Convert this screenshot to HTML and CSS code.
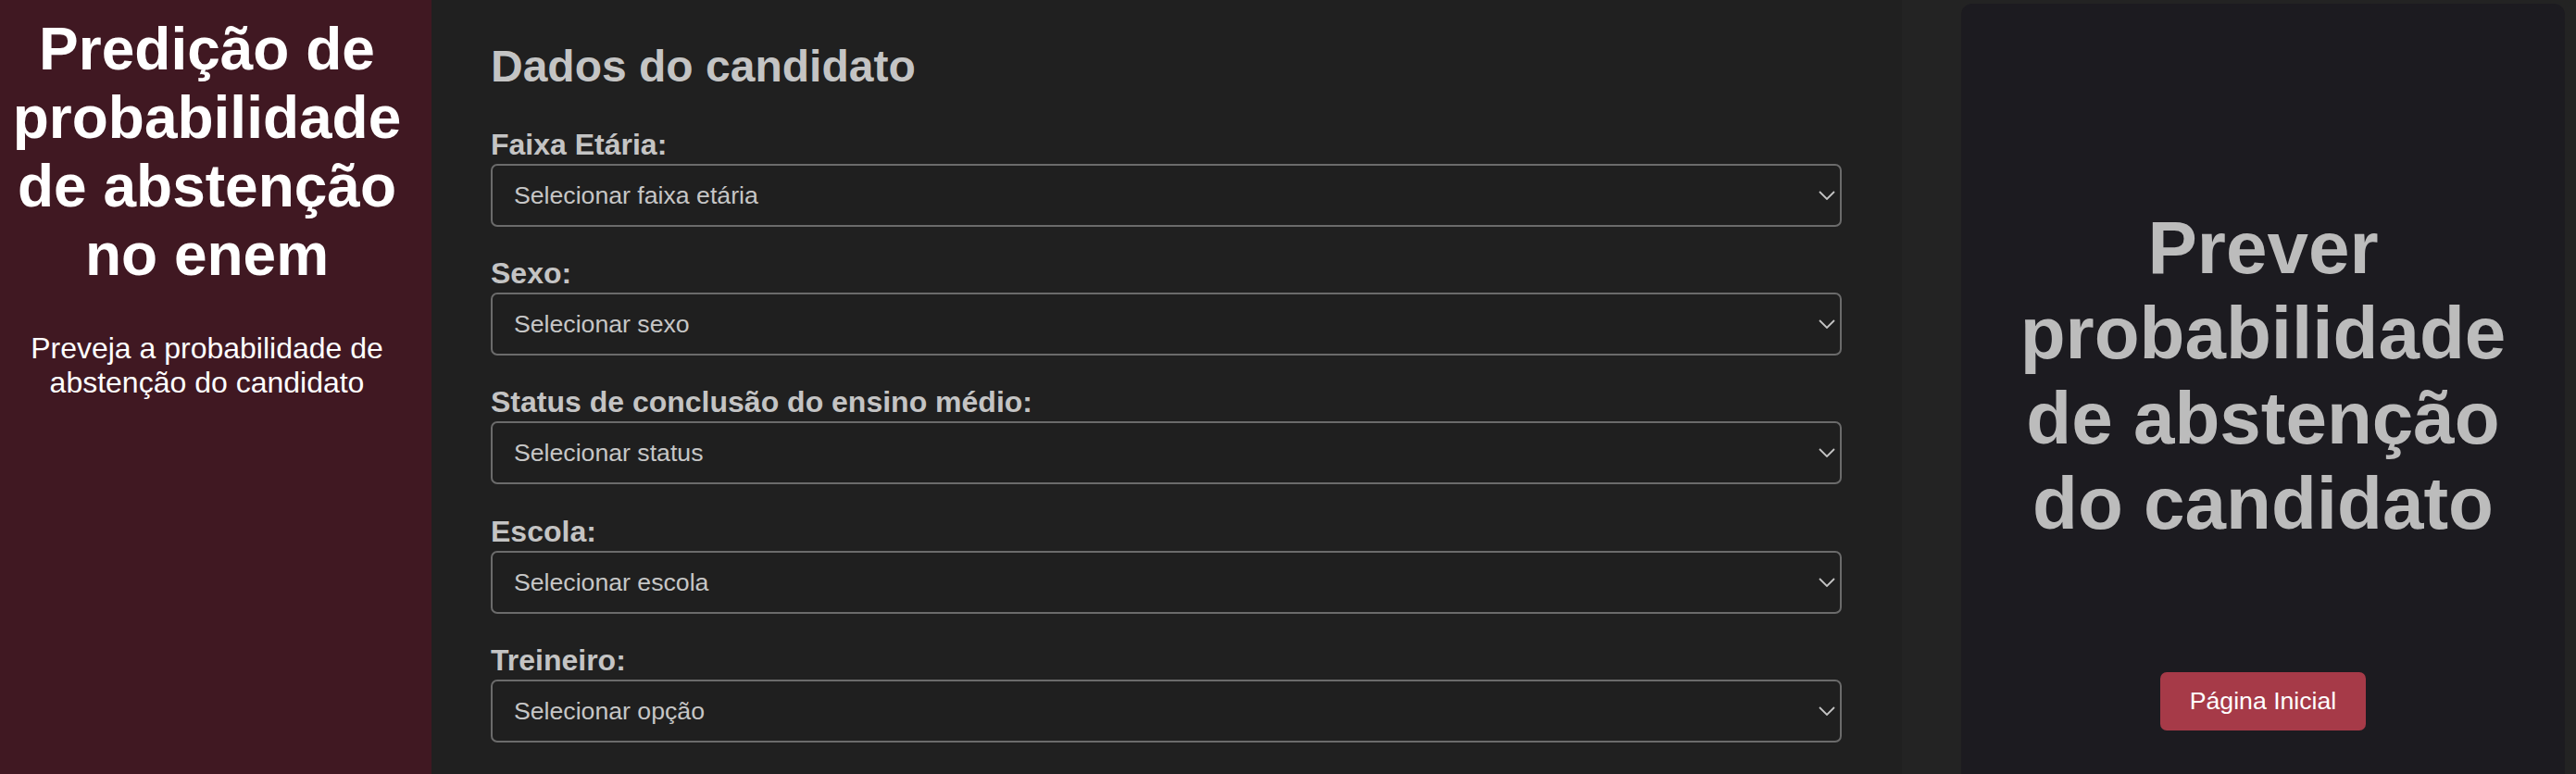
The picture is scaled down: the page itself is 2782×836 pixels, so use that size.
FILE: index.html
```html
<!DOCTYPE html>
<html lang="pt-BR">
<head>
<meta charset="utf-8">
<title>Predição de probabilidade de abstenção no enem</title>
<link rel="stylesheet" href="styles.css">
</head>
<body>
<div class="app">
  <aside class="sidebar">
    <h1 class="sidebar-title">Predição de probabilidade de abstenção no enem</h1>
    <p class="sidebar-sub">Preveja a probabilidade de abstenção do candidato</p>
  </aside>
  <main class="main">
    <h2 class="section-title">Dados do candidato</h2>
    <div class="field">
      <label class="field-label" for="faixa">Faixa Etária:</label>
      <div class="select-wrap">
        <select id="faixa" class="select"><option>Selecionar faixa etária</option></select>
        <svg class="chevron" viewBox="0 0 18 10" width="18" height="10"><path d="M1 1 L9 9 L17 1" fill="none" stroke="#c4c4c4" stroke-width="1.8"/></svg>
      </div>
    </div>
    <div class="field">
      <label class="field-label" for="sexo">Sexo:</label>
      <div class="select-wrap">
        <select id="sexo" class="select"><option>Selecionar sexo</option></select>
        <svg class="chevron" viewBox="0 0 18 10" width="18" height="10"><path d="M1 1 L9 9 L17 1" fill="none" stroke="#c4c4c4" stroke-width="1.8"/></svg>
      </div>
    </div>
    <div class="field">
      <label class="field-label" for="status">Status de conclusão do ensino médio:</label>
      <div class="select-wrap">
        <select id="status" class="select"><option>Selecionar status</option></select>
        <svg class="chevron" viewBox="0 0 18 10" width="18" height="10"><path d="M1 1 L9 9 L17 1" fill="none" stroke="#c4c4c4" stroke-width="1.8"/></svg>
      </div>
    </div>
    <div class="field">
      <label class="field-label" for="escola">Escola:</label>
      <div class="select-wrap">
        <select id="escola" class="select"><option>Selecionar escola</option></select>
        <svg class="chevron" viewBox="0 0 18 10" width="18" height="10"><path d="M1 1 L9 9 L17 1" fill="none" stroke="#c4c4c4" stroke-width="1.8"/></svg>
      </div>
    </div>
    <div class="field">
      <label class="field-label" for="treineiro">Treineiro:</label>
      <div class="select-wrap">
        <select id="treineiro" class="select"><option>Selecionar opção</option></select>
        <svg class="chevron" viewBox="0 0 18 10" width="18" height="10"><path d="M1 1 L9 9 L17 1" fill="none" stroke="#c4c4c4" stroke-width="1.8"/></svg>
      </div>
    </div>
  </main>
  <section class="result-col">
    <div class="result-panel">
      <h2 class="result-title">Prever probabilidade de abstenção do candidato</h2>
      <button class="home-btn" type="button">Página Inicial</button>
    </div>
  </section>
</div>
</body>
</html>
```
FILE: styles.css
```css
* { box-sizing: border-box; }
html, body {
  margin: 0;
  padding: 0;
  height: 836px;
  overflow: hidden;
  background: #202020;
  font-family: "Liberation Sans", Arial, sans-serif;
}
.app {
  display: flex;
  height: 836px;
}
.sidebar {
  width: 466px;
  flex: 0 0 466px;
  background: #401822;
  color: #ffffff;
  padding: 16px 29px 0 10px;
  text-align: center;
}
.sidebar-title {
  margin: 0 0 46px;
  font-size: 64px;
  font-weight: bold;
  line-height: normal;
}
.sidebar-sub {
  margin: 0;
  font-size: 32px;
  line-height: normal;
}
.main {
  flex: 0 0 1588px;
  width: 1588px;
  background: #202020;
  padding: 44px 65px 0 64px;
}
.section-title {
  margin: 0 0 39px;
  font-size: 48px;
  font-weight: bold;
  line-height: normal;
  color: #c4c4c4;
}
.field {
  margin-bottom: 32.2px;
}
.field-label {
  display: block;
  font-size: 32px;
  font-weight: bold;
  line-height: normal;
  color: #c4c4c4;
  margin-bottom: 2px;
}
.select-wrap {
  position: relative;
}
.select {
  display: block;
  width: 100%;
  height: 68px;
  -webkit-appearance: none;
  appearance: none;
  background: #1f1f1f;
  border: 2px solid #6b6b6b;
  border-radius: 7px;
  padding: 0 50px 0 23px;
  font-family: "Liberation Sans", Arial, sans-serif;
  font-size: 26.67px;
  color: #c6c6c6;
  outline: none;
}
.chevron {
  position: absolute;
  right: 7px;
  top: 29px;
  pointer-events: none;
}
.result-col {
  flex: 1 1 auto;
  background: #232323;
  padding: 4px 12px 0 64px;
}
.result-panel {
  height: 100%;
  background: #1c1b20;
  border-radius: 12px 12px 0 0;
  padding: 218px 36px 0;
  display: flex;
  flex-direction: column;
  align-items: center;
}
.result-title {
  margin: 0 0 136px;
  font-size: 80px;
  line-height: normal;
  font-weight: bold;
  color: #bcbcbc;
  text-align: center;
}
.home-btn {
  background: #a63a48;
  color: #ffffff;
  border: none;
  border-radius: 7px;
  font-family: "Liberation Sans", Arial, sans-serif;
  font-size: 26.67px;
  line-height: normal;
  padding: 16px 32px;
  cursor: pointer;
}
```
